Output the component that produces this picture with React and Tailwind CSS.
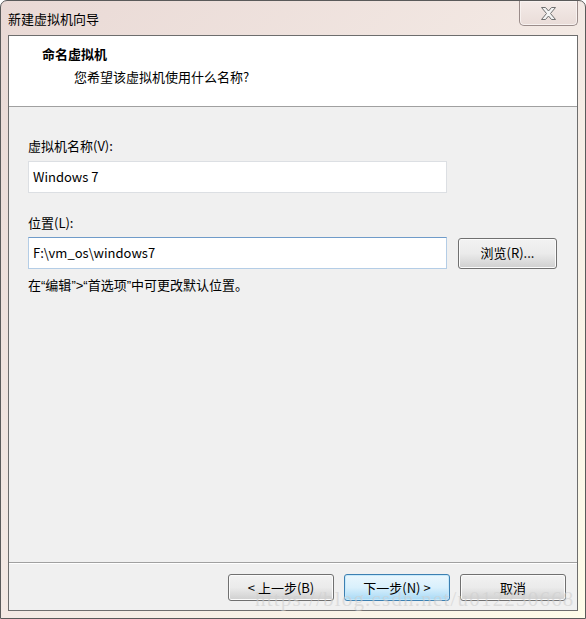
const font = { fontFamily: '"Microsoft YaHei", "Noto Sans CJK SC", "Liberation Sans", sans-serif' };
const latin = { fontFamily: '"Liberation Sans", sans-serif' };

function WinButton({ children, primary }) {
  return (
    <button
      className={
        primary
          ? "h-[27px] w-[106px] rounded-[3px] border border-[#3c7fb1] bg-gradient-to-b from-[#eaf6fd] via-[#d9f0fc] to-[#a7d9f5] text-[13px] text-black shadow-[inset_0_0_0_1px_#c6e9fb]"
          : "h-[27px] w-[106px] rounded-[3px] border border-[#707070] bg-gradient-to-b from-[#f2f2f2] via-[#ebebeb] to-[#cfcfcf] text-[13px] text-black shadow-[inset_0_0_0_1px_#fbfbfb]"
      }
    >
      {children}
    </button>
  );
}

function CloseButton() {
  return (
    <div className="flex h-[25px] w-[59px] items-center justify-center rounded-b-[5px] border border-t-0 border-[#9a8c8a] bg-gradient-to-b from-[#f4ebe8] to-[#e9dcd8] shadow-[inset_0_0_0_1px_#f8f2f0]">
      <svg width="17" height="15" viewBox="0 0 17 15">
        <path
          d="M1.5 1.5h4l3 3.5 3-3.5h4l-5 6 5 6h-4l-3-3.5-3 3.5h-4l5-6z"
          fill="#f4f4f4"
          stroke="#6f6f6f"
          strokeWidth="1"
          strokeLinejoin="round"
        />
      </svg>
    </div>
  );
}

export default function App() {
  return (
    <div className="relative h-[619px] w-[586px] overflow-hidden bg-white" style={font}>
      <div className="flex h-full w-full flex-col rounded-t-[7px] border border-[#5a5a5a] bg-gradient-to-br from-[#e9d9d5] via-[#f3e9e4] to-[#fefce9]">
        {/* title bar */}
        <div className="flex h-[34px] shrink-0 items-start justify-between">
          <div className="pl-[7px] pt-[10px] text-[13px] leading-[16px] text-black">新建虚拟机向导</div>
          <div className="pr-[7px]">
            <CloseButton />
          </div>
        </div>

        {/* client area */}
        <div className="mx-[7px] flex h-[576px] flex-col border border-[#6d6d6d] bg-[#f0f0f0]">
          {/* header */}
          <div className="h-[71px] shrink-0 border-b border-[#a0a0a0] bg-white pl-[33px] pt-[9px]">
            <div className="text-[13px] font-bold leading-[17px] text-black">命名虚拟机</div>
            <div className="pl-[32px] pt-[6px] text-[13px] leading-[17px] text-black">您希望该虚拟机使用什么名称?</div>
          </div>

          {/* body */}
          <div className="flex-1 px-[19px] pt-[31px] text-[13px] text-black">
            <div className="leading-[16px]">虚拟机名称(V):</div>
            <div className="mt-[7px] flex h-[32px] w-[419px] items-center border border-[#dcdfe3] bg-white pl-[4px] leading-[16px]">
              Windows 7
            </div>
            <div className="mt-[22px] leading-[16px]">位置(L):</div>
            <div className="mt-[6px] flex items-center gap-[11px]">
              <div className="flex h-[32px] w-[419px] items-center border border-[#b4cde6] border-t-[#6f9bc9] bg-white pl-[4px] leading-[16px]">
                F:\vm_os\windows7
              </div>
              <button className="h-[31px] w-[99px] rounded-[3px] border border-[#707070] bg-gradient-to-b from-[#f2f2f2] via-[#ebebeb] to-[#cfcfcf] text-[13px] shadow-[inset_0_0_0_1px_#fbfbfb]">
                浏览(R)...
              </button>
            </div>
            <div className="mt-[8px] leading-[16px]">
              在<span style={latin}>“</span>编辑<span style={latin}>”&gt;“</span>首选项<span style={latin}>”</span>中可更改默认位置。
            </div>
          </div>

          {/* footer */}
          <div className="h-[48px] shrink-0 border-t border-[#a0a0a0]">
            <div className="flex h-full items-start justify-end gap-[10px] border-t border-white pr-[11px] pt-[10px]">
              <WinButton>&lt; 上一步(B)</WinButton>
              <WinButton primary>下一步(N) &gt;</WinButton>
              <WinButton>取消</WinButton>
            </div>
          </div>
        </div>
      </div>

      {/* watermark */}
      <div
        className="pointer-events-none absolute left-[255px] top-[587px] text-[21px] leading-[24px] tracking-[1.2px] text-[#cfcfcf]/60"
        style={{ fontFamily: '"Liberation Serif", serif' }}
      >
        https://blog.csdn.net/u012230668
      </div>
    </div>
  );
}
